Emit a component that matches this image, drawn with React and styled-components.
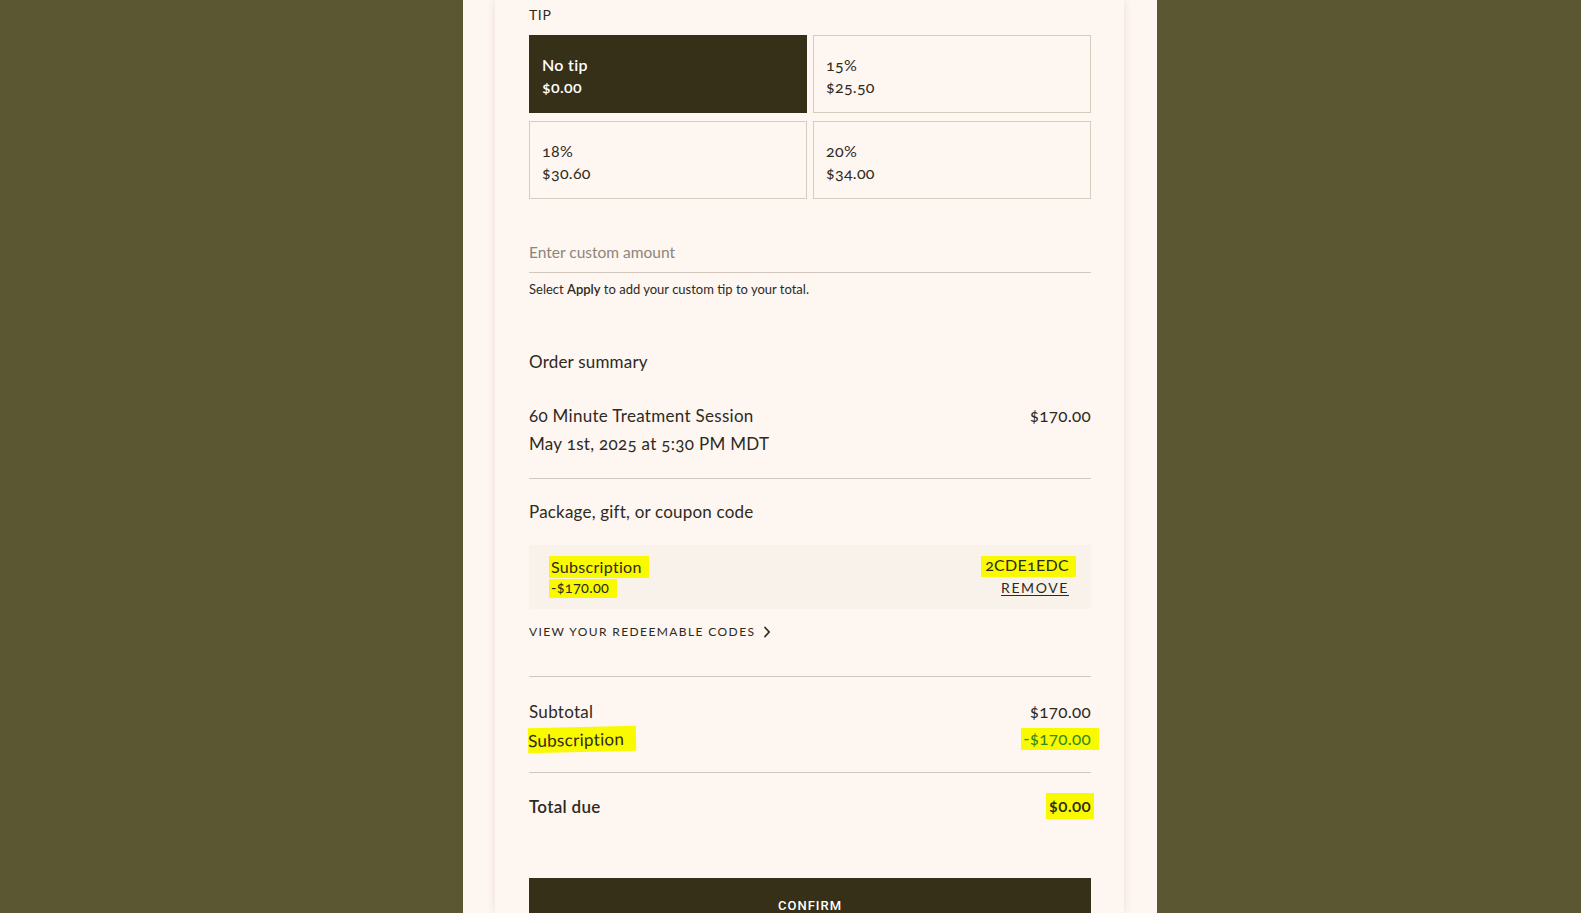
import React, { useState } from 'react'
import styled, { createGlobalStyle } from 'styled-components'

const GlobalStyle = createGlobalStyle`
  html, body {
    margin: 0;
    height: 100%;
    overflow: hidden;
    background: #5b5733;
  }
  #root {
    height: 100%;
  }
  * {
    box-sizing: border-box;
  }
`;

const tips = [
  { label: 'No tip', amount: '$0.00' },
  { label: '15%', amount: '$25.50' },
  { label: '18%', amount: '$30.60' },
  { label: '20%', amount: '$34.00' },
];

const App = () => {
  const [selected, setSelected] = useState(0);
  const [custom, setCustom] = useState('');

  return (
    <>
      <GlobalStyle />
      <Page>
        <Sheet>
          <Card>
            <SectionLabel>Tip</SectionLabel>
            <TipGrid>
              {tips.map((tip, i) => (
                <TipOption key={tip.label} $active={i === selected} onClick={() => setSelected(i)}>
                  <span>{tip.label}</span>
                  <span>{tip.amount}</span>
                </TipOption>
              ))}
            </TipGrid>

            <CustomInput
              type="text"
              placeholder="Enter custom amount"
              value={custom}
              onChange={e => setCustom(e.target.value)}
            />
            <Helper>Select <b>Apply</b> to add your custom tip to your total.</Helper>

            <SummaryTitle>Order summary</SummaryTitle>
            <ItemRow>
              <div>
                <Line>60 Minute Treatment Session</Line>
                <Line>May 1st, 2025 at 5:30 PM MDT</Line>
              </div>
              <Line>$170.00</Line>
            </ItemRow>

            <CodeSection>
              <SummaryTitle $tight>Package, gift, or coupon code</SummaryTitle>
              <AppliedCode>
                <CodeCol>
                  <Highlight $pad="2px 7px 2px 2px" $shift="-2px">Subscription</Highlight>
                  <Discount><Highlight $pad="1px 8px 1px 2px" $shift="-2px">-$170.00</Highlight></Discount>
                </CodeCol>
                <CodeCol $right>
                  <Highlight $pad="0px 7px 3px 4px" $shift="-4px" $end="-7px">2CDE1EDC</Highlight>
                  <RemoveLink>Remove</RemoveLink>
                </CodeCol>
              </AppliedCode>
              <ViewCodes>
                View your redeemable codes
                <svg width="8" height="12" viewBox="0 0 8 12" fill="none">
                  <path d="M2 1.5 L6.2 6 L2 10.5" stroke="#2d2a1e" strokeWidth="1.8" strokeLinecap="round" strokeLinejoin="round" />
                </svg>
              </ViewCodes>
            </CodeSection>

            <Totals>
              <TotalRow>
                <span>Subtotal</span>
                <span>$170.00</span>
              </TotalRow>
              <TotalRow>
                <Highlight $pad="3px 12px 2px 0" $shift="-1px" $skew>Subscription</Highlight>
                <Highlight $pad="1px 8px 2px 2px" $end="-8px" $green>-$170.00</Highlight>
              </TotalRow>
            </Totals>

            <DueRow>
              <span>Total due</span>
              <Highlight $pad="3px 3px 4px 3px" $end="-3px">$0.00</Highlight>
            </DueRow>

            <ConfirmButton>Confirm</ConfirmButton>
          </Card>
        </Sheet>
      </Page>
    </>
  )
}

export default App;

const Page = styled.div`
  height: 100%;
  display: flex;
  justify-content: center;
  padding-left: 38px;
  font-family: Lato, "Open Sans", sans-serif;
  font-variant-numeric: oldstyle-nums;
  color: #2d2a1e;
`;

const Sheet = styled.div`
  width: 694px;
  background: #fef6f0;
  display: flex;
  justify-content: center;
`;

const Card = styled.div`
  width: 629px;
  background: #fef6f0;
  box-shadow: 0 0 8px rgba(90, 60, 40, 0.12);
  padding: 5px 33px 0 34px;
  display: flex;
  flex-direction: column;

  & > * {
    flex-shrink: 0;
  }
`;

const SectionLabel = styled.div`
  font-size: 14px;
  line-height: 20px;
  text-transform: uppercase;
  letter-spacing: 0.6px;
  margin-bottom: 10px;
`;

const TipGrid = styled.div`
  display: grid;
  grid-template-columns: 1fr 1fr;
  gap: 8px 6px;
`;

const TipOption = styled.button`
  height: 78px;
  display: flex;
  flex-direction: column;
  justify-content: center;
  align-items: flex-start;
  padding: 3px 12px 0;
  font-family: inherit;
  font-variant-numeric: oldstyle-nums;
  font-size: 16px;
  line-height: 22px;
  letter-spacing: 0.3px;
  cursor: pointer;
  border: 1px solid ${p => (p.$active ? '#373019' : '#d8ccc0')};
  background: ${p => (p.$active ? '#373019' : 'transparent')};
  color: ${p => (p.$active ? '#ffffff' : '#2d2a1e')};
  font-weight: ${p => (p.$active ? 600 : 400)};
`;

const CustomInput = styled.input`
  margin-top: 32px;
  height: 42px;
  border: none;
  border-bottom: 1px solid #d3c8bd;
  background: transparent;
  padding: 0;
  outline: none;
  font-family: inherit;
  font-size: 15.5px;
  color: #2d2a1e;
  &::placeholder {
    color: #8c857c;
  }
`;

const Helper = styled.p`
  margin: 8px 0 0;
  font-size: 13px;
  line-height: 16px;
  b {
    font-weight: 600;
  }
`;

const SummaryTitle = styled.h3`
  margin: ${p => (p.$tight ? '0' : '53px 0 0')};
  font-size: 17px;
  line-height: 24px;
  font-weight: 400;
  letter-spacing: 0.2px;
`;

const ItemRow = styled.div`
  margin-top: 28px;
  padding-bottom: 20px;
  border-bottom: 1px solid #d3c8bd;
  display: flex;
  justify-content: space-between;
  align-items: flex-start;
`;

const Line = styled.div`
  font-size: 17px;
  line-height: 28px;
  letter-spacing: 0.3px;
`;

const CodeSection = styled.div`
  padding: 21px 0 36px;
  border-bottom: 1px solid #d3c8bd;
`;

const AppliedCode = styled.div`
  margin-top: 21px;
  height: 64px;
  background: #f8f2eb;
  padding: 11px 22px 0 22px;
  display: flex;
  justify-content: space-between;
`;

const CodeCol = styled.div`
  display: flex;
  flex-direction: column;
  align-items: ${p => (p.$right ? 'flex-end' : 'flex-start')};
  font-size: 16px;
  line-height: 20px;
  letter-spacing: 0.3px;
`;

const Discount = styled.div`
  font-size: 14.5px;
  line-height: 20px;
`;

const Highlight = styled.span`
  display: inline-block;
  background: #f9f900;
  padding: ${p => p.$pad || '0'};
  margin: 0 ${p => p.$end || '0'} 0 ${p => p.$shift || '0'};
  color: ${p => (p.$green ? '#2f8a1f' : 'inherit')};
  transform: ${p => (p.$skew ? 'rotate(-1.2deg)' : 'none')};
  line-height: 1.15;
`;

const RemoveLink = styled.a`
  font-size: 14px;
  line-height: 22px;
  text-transform: uppercase;
  letter-spacing: 1.6px;
  text-decoration: underline;
  text-underline-offset: 2px;
  cursor: pointer;
`;

const ViewCodes = styled.a`
  margin-top: 15px;
  display: flex;
  align-items: center;
  gap: 8px;
  font-size: 12px;
  line-height: 16px;
  text-transform: uppercase;
  letter-spacing: 1.4px;
  cursor: pointer;
`;

const Totals = styled.div`
  padding: 20px 0 19px;
  border-bottom: 1px solid #d3c8bd;
`;

const TotalRow = styled.div`
  height: 28px;
  display: flex;
  justify-content: space-between;
  align-items: center;
  font-size: 17px;
  letter-spacing: 0.3px;
`;

const DueRow = styled.div`
  margin-top: 21px;
  height: 24px;
  display: flex;
  justify-content: space-between;
  align-items: center;
  font-size: 17px;
  font-weight: 600;
  letter-spacing: 0.3px;
`;

const ConfirmButton = styled.button`
  margin-top: 60px;
  height: 54px;
  border: none;
  background: #373019;
  color: #ffffff;
  font-family: Roboto, sans-serif;
  font-size: 13px;
  font-weight: 500;
  text-transform: uppercase;
  letter-spacing: 1px;
  cursor: pointer;
`;
